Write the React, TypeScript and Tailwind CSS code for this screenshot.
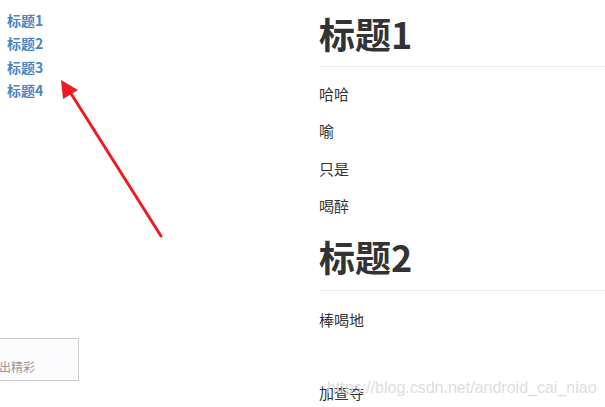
import React from "react";

const links = ["标题1", "标题2", "标题3", "标题4"];

function Arrow() {
  return (
    <svg className="absolute left-0 top-0 pointer-events-none" width="200" height="260" viewBox="0 0 200 260">
      <line x1="161" y1="236" x2="70" y2="92" stroke="#ed1c24" strokeWidth="3" strokeLinecap="round" />
      <polygon points="61,80 63,99 78,90" fill="#ed1c24" />
    </svg>
  );
}

export default function App() {
  return (
    <div
      className="relative flex w-[605px] h-[407px] overflow-hidden bg-white text-[#333]"
      style={{ fontFamily: '"Noto Sans CJK SC", "Liberation Sans", sans-serif' }}
    >
      {/* Sidebar / TOC */}
      <div className="w-[319px] shrink-0 flex flex-col">
        <ul className="pt-[9px] pl-[7px]">
          {links.map((t) => (
            <li key={t} className="text-[14px] leading-[23.3px] font-bold text-[#4a86c6]">
              {t}
            </li>
          ))}
        </ul>
        <div className="mt-[236px] ml-[-60px] w-[139px] h-[43px] border border-[#ccc] bg-[#fcfcfe] flex items-end pb-[3px] pl-[58px]">
          <span className="text-[12px] leading-[20px] text-[#999]">出精彩</span>
        </div>
      </div>

      {/* Content */}
      <div className="flex-1 flex flex-col">
        <h1 className="mt-[12px] pb-[11px] border-b border-[#eee] text-[36px] leading-[43px] font-bold">标题1</h1>
        <div className="mt-[16px] flex flex-col gap-[15px] text-[15px] leading-[22.3px]">
          <p>哈哈</p>
          <p>喻</p>
          <p>只是</p>
          <p>喝醉</p>
        </div>
        <h1 className="mt-[18px] pb-[12px] border-b border-[#eee] text-[36px] leading-[43px] font-bold">标题2</h1>
        <div className="mt-[18px] flex flex-col gap-[14px] text-[15px] leading-[22.3px]">
          <p>棒喝地</p>
          <p>&nbsp;</p>
          <p>加查夺</p>
        </div>
      </div>

      <Arrow />
      <div
        className="absolute left-[327px] top-[378px] text-[16px] leading-[20px] text-[#dedede]"
        style={{ fontFamily: '"Liberation Sans", Arial, sans-serif' }}
      >
        https://blog.csdn.net/android_cai_niao
      </div>
    </div>
  );
}
